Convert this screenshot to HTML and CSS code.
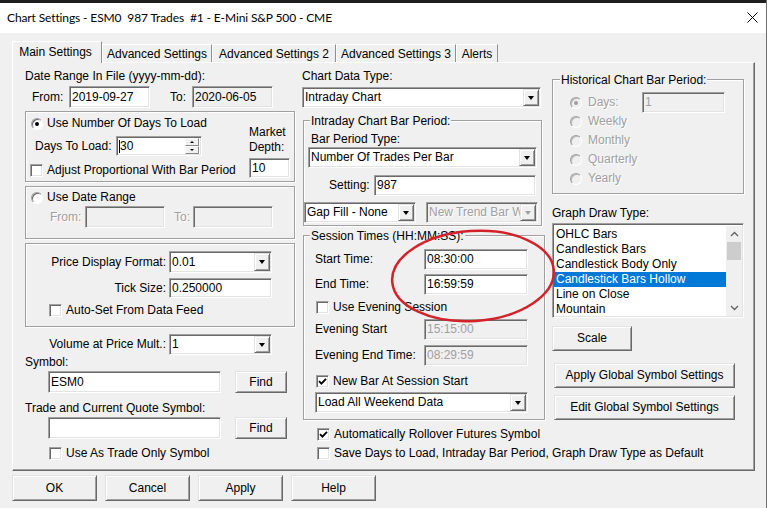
FILE: index.html
```html
<!DOCTYPE html>
<html lang="en">
<head>
<meta charset="utf-8">
<title>Chart Settings</title>
<link rel="stylesheet" href="styles.css">
</head>
<body>
<div class="window">
  <div class="topstrip"></div>
  <div class="titlebar">
    <span class="title">Chart Settings - ESM0&nbsp; 987 Trades&nbsp; #1 - E-Mini S&amp;P 500 - CME</span>
    <svg class="close" viewBox="0 0 11 11"><path d="M0.5 0.5L10.5 10.5M10.5 0.5L0.5 10.5" stroke="#000" stroke-width="1" fill="none"/></svg>
  </div>
  <div class="client">
    <div class="tabs">
      <div class="tab active t-main">Main Settings</div>
      <div class="tab t-adv">Advanced Settings</div>
      <div class="tab t-adv2">Advanced Settings 2</div>
      <div class="tab t-adv3">Advanced Settings 3</div>
      <div class="tab t-alerts">Alerts</div>
    </div>
    <div class="panel">
      <!-- LEFT COLUMN -->
      <div class="col">
        <div class="line">Date Range In File (yyyy-mm-dd):</div>
        <div class="row daterange">
          <span class="from-lbl">From:</span>
          <span class="field h22 w-date">2019-09-27</span>
          <span class="to-lbl">To:</span>
          <span class="field ro h22 w-date">2020-06-05</span>
        </div>
        <div class="group g-days">
          <div class="g-days-main">
            <div class="row opt"><span class="rb on"></span><span class="txt">Use Number Of Days To Load</span></div>
            <div class="row days-row">
              <span class="days-lbl">Days To Load:</span>
              <span class="field spin h20 w-days"><span class="val"><i class="caret"></i>30</span><span class="spinbtns"><span class="sbtn up"></span><span class="sbtn down"></span></span></span>
            </div>
            <div class="row cbrow days-cb"><span class="cb"></span><span class="txt">Adjust Proportional With Bar Period</span></div>
          </div>
          <div class="g-days-depth">
            <div class="line">Market</div>
            <div class="line">Depth:</div>
            <span class="field h20 w-depth">10</span>
          </div>
        </div>
        <div class="group g-range">
          <div class="row opt"><span class="rb"></span><span class="txt">Use Date Range</span></div>
          <div class="row range2">
            <span class="dis r-from">From:</span>
            <span class="field ro h22 w-rdate"></span>
            <span class="dis r-to">To:</span>
            <span class="field ro h22 w-rdate"></span>
          </div>
        </div>
        <div class="group g-price">
          <div class="row lblrow"><span class="rlbl">Price Display Format:</span><span class="select h22 w-fmt"><span class="val">0.01</span><span class="arrow"></span></span></div>
          <div class="row lblrow tick-row"><span class="rlbl">Tick Size:</span><span class="field h20 w-fmt">0.250000</span></div>
          <div class="row cbrow price-cb"><span class="cb"></span><span class="txt">Auto-Set From Data Feed</span></div>
        </div>
        <div class="row lblrow vol-row"><span class="rlbl vlbl">Volume at Price Mult.:</span><span class="select h21 w-fmt"><span class="val">1</span><span class="arrow"></span></span></div>
        <div class="line sym-lbl">Symbol:</div>
        <div class="row sym-row"><span class="field h22 w-sym">ESM0</span><span class="btn find">Find</span></div>
        <div class="line trade-lbl">Trade and Current Quote Symbol:</div>
        <div class="row sym-row"><span class="field h22 w-sym"></span><span class="btn find">Find</span></div>
        <div class="row cbrow trade-cb"><span class="cb"></span><span class="txt">Use As Trade Only Symbol</span></div>
      </div>

      <!-- MIDDLE COLUMN -->
      <div class="col">
        <div class="line">Chart Data Type:</div>
        <div class="select h21 w-cdt"><span class="val">Intraday Chart</span><span class="arrow"></span></div>
        <div class="group g-intraday">
          <div class="glegend">Intraday Chart Bar Period:</div>
          <div class="line bpt-lbl">Bar Period Type:</div>
          <div class="select h21 w-bpt"><span class="val">Number Of Trades Per Bar</span><span class="arrow"></span></div>
          <div class="row setting-row"><span class="setting-lbl">Setting:</span><span class="field h21 w-setting">987</span></div>
          <div class="row gap-row">
            <span class="select h21 w-gap"><span class="val">Gap Fill - None</span><span class="arrow"></span></span>
            <span class="select dis h21 w-gap trend"><span class="val">New Trend Bar W</span><span class="arrow"></span></span>
          </div>
        </div>
        <div class="group g-session">
          <div class="glegend">Session Times (HH:MM:SS):</div>
          <div class="row time-row first"><span class="time-lbl">Start Time:</span><span class="field h21 w-time">08:30:00</span></div>
          <div class="row time-row"><span class="time-lbl">End Time:</span><span class="field h21 w-time">16:59:59</span></div>
          <div class="row cbrow sess-cb"><span class="cb"></span><span class="txt">Use Evening Session</span></div>
          <div class="row time-row eve1"><span class="time-lbl">Evening Start</span><span class="field ro dtext h21 w-time">15:15:00</span></div>
          <div class="row time-row eve2"><span class="time-lbl">Evening End Time:</span><span class="field ro dtext h21 w-time">08:29:59</span></div>
          <div class="row cbrow sess-cb2"><span class="cb"><svg viewBox="0 0 9 9" width="9" height="9"><path d="M1 4.2L3.4 6.6L8 1.8" fill="none" stroke="#000" stroke-width="1.8"/></svg></span><span class="txt">New Bar At Session Start</span></div>
          <div class="select h21 w-weekend"><span class="val">Load All Weekend Data</span><span class="arrow"></span></div>
        </div>
        <div class="row cbrow roll-cb"><span class="cb"><svg viewBox="0 0 9 9" width="9" height="9"><path d="M1 4.2L3.4 6.6L8 1.8" fill="none" stroke="#000" stroke-width="1.8"/></svg></span><span class="txt">Automatically Rollover Futures Symbol</span></div>
        <div class="row cbrow save-cb"><span class="cb"></span><span class="txt">Save Days to Load, Intraday Bar Period, Graph Draw Type as Default</span></div>
      </div>

      <!-- RIGHT COLUMN -->
      <div class="col">
        <div class="group g-hist">
          <div class="glegend">Historical Chart Bar Period:</div>
          <div class="row hist-days"><span class="rb dis-rb on"></span><span class="dis hist-lbl">Days:</span><span class="field ro dtext h21 w-hdays">1</span></div>
          <div class="row hist-opt first"><span class="rb dis-rb"></span><span class="dis">Weekly</span></div>
          <div class="row hist-opt"><span class="rb dis-rb"></span><span class="dis">Monthly</span></div>
          <div class="row hist-opt"><span class="rb dis-rb"></span><span class="dis">Quarterly</span></div>
          <div class="row hist-opt"><span class="rb dis-rb"></span><span class="dis">Yearly</span></div>
        </div>
        <div class="line gdt-lbl">Graph Draw Type:</div>
        <div class="listbox">
          <div class="items">
            <div class="item">OHLC Bars</div>
            <div class="item">Candlestick Bars</div>
            <div class="item">Candlestick Body Only</div>
            <div class="item sel">Candlestick Bars Hollow</div>
            <div class="item">Line on Close</div>
            <div class="item">Mountain</div>
          </div>
          <div class="vscroll">
            <span class="sarrow"><svg viewBox="0 0 9 6" width="9" height="6"><path d="M1 5L4.5 1.5L8 5" fill="none" stroke="#606060" stroke-width="1.3"/></svg></span>
            <span class="track"><span class="thumb"></span></span>
            <span class="sarrow"><svg viewBox="0 0 9 6" width="9" height="6"><path d="M1 1L4.5 4.5L8 1" fill="none" stroke="#606060" stroke-width="1.3"/></svg></span>
          </div>
        </div>
        <div class="btn scale">Scale</div>
        <div class="btn global apply-g">Apply Global Symbol Settings</div>
        <div class="btn global edit-g">Edit Global Symbol Settings</div>
      </div>

      <svg class="annot" width="741" height="407" viewBox="0 0 741 407"><ellipse cx="460" cy="213" rx="81" ry="45" transform="rotate(-4 460 213)" fill="none" stroke="#d3222a" stroke-width="2.5"/></svg>
    </div>
    <div class="buttons">
      <span class="btn dlg">OK</span>
      <span class="btn dlg">Cancel</span>
      <span class="btn dlg">Apply</span>
      <span class="btn dlg">Help</span>
    </div>
  </div>
</div>
</body>
</html>
```

FILE: styles.css
```css
* { box-sizing: border-box; }
html, body { margin: 0; padding: 0; }
body {
  width: 768px; height: 508px; overflow: hidden; background: #fff;
  font: 12px/15px "Liberation Sans", Arial, sans-serif; color: #000;
}
.window { width: 767px; height: 508px; border-right: 1px solid #707070; display: flex; flex-direction: column; }
.topstrip { height: 3px; flex: none; background: #1e1e1e; }
.titlebar {
  height: 30px; flex: none; background: #fff; display: flex; align-items: center;
  justify-content: space-between; padding: 0 8px 2px 7px;
}
.title { font-family: Lato, "Noto Sans", sans-serif; font-size: 12px; letter-spacing: -0.12px; white-space: nowrap; }
.close { width: 11px; height: 11px; }
.client { flex: 1; background: #f0f0f0; padding: 8px 0 0 12px; }

/* tabs */
.tabs { display: flex; align-items: flex-end; height: 21px; }
.tab {
  height: 18px; padding-top: 2px; line-height: 15px; text-align: center; white-space: nowrap;
  border-top: 1px solid #fff; border-left: 1px solid #fff; border-right: 1px solid #8f8f8f;
}
.tab.active { height: 22px; padding-top: 3px; margin-bottom: -1px; position: relative; z-index: 2; background: #f0f0f0; }
.t-main { width: 90px; padding-right: 3px; }
.t-adv { width: 110px; }
.t-adv2 { width: 124px; }
.t-adv3 { width: 120px; }
.t-alerts { width: 42px; }

/* panel */
.panel {
  position: relative; width: 743px; height: 409px;
  border: 1px solid; border-color: #fff #696969 #696969 #fff;
  box-shadow: inset -1px -1px #a0a0a0;
  display: grid; grid-template-columns: 270px 243px 192px; column-gap: 7px;
  padding-left: 12px; align-items: start;
}
.col { padding-top: 6px; }
.annot { position: absolute; left: 0; top: 0; pointer-events: none; }

.line { height: 15px; line-height: 15px; white-space: nowrap; }
.row { display: flex; align-items: center; white-space: nowrap; }
.cbrow, .opt { height: 15px; }
.txt { margin-left: 4px; }
.dis { color: #a0a0a0; text-shadow: 1px 1px #fff; }

/* controls */
.field {
  display: flex; align-items: center; flex: none; background: #fff;
  border: 1px solid; border-color: #a0a0a0 #fff #fff #a0a0a0;
  box-shadow: inset 1px 1px #696969, inset -1px -1px #e3e3e3;
  padding-left: 2px; white-space: nowrap; overflow: hidden;
}
.field.ro { background: #f0f0f0; }
.field.dtext { color: #a0a0a0; }
.h20 { height: 20px; }
.h21 { height: 21px; }
.h22 { height: 22px; }

.select {
  display: flex; flex: none; background: #fff;
  border: 1px solid; border-color: #a0a0a0 #fff #fff #a0a0a0;
  box-shadow: inset 1px 1px #696969, inset -1px -1px #e3e3e3;
  padding: 1px; white-space: nowrap;
}
.select .val { flex: 1; min-width: 0; overflow: hidden; display: flex; align-items: center; padding-left: 1px; }
.select .arrow {
  width: 16px; flex: none; display: flex; align-items: center; justify-content: center;
  background: #f0f0f0; border: 1px solid; border-color: #e3e3e3 #696969 #696969 #e3e3e3;
  box-shadow: inset 1px 1px #fff, inset -1px -1px #a0a0a0;
}
.select .arrow::after {
  content: ""; border-style: solid; border-width: 4px 3.5px 0 3.5px;
  border-color: #000 transparent transparent transparent;
}
.select.dis { background: #f0f0f0; }
.select.dis .val { color: #a0a0a0; text-shadow: 1px 1px #fff; }
.select.dis .arrow::after { border-top-color: #a0a0a0; }

.btn {
  display: flex; align-items: center; justify-content: center; flex: none;
  background: #f0f0f0; white-space: nowrap;
  border: 1px solid; border-color: #e3e3e3 #696969 #696969 #e3e3e3;
  box-shadow: inset 1px 1px #fff, inset -1px -1px #a0a0a0;
}

.cb {
  width: 13px; height: 13px; flex: none; background: #fff;
  border: 1px solid; border-color: #a0a0a0 #fff #fff #a0a0a0;
  box-shadow: inset 1px 1px #696969, inset -1px -1px #e3e3e3;
  display: inline-flex; align-items: center; justify-content: center;
}
.rb {
  width: 12px; height: 12px; flex: none; border-radius: 50%; background: #fff;
  border: 1px solid; border-color: #a0a0a0 #fff #fff #a0a0a0;
  box-shadow: inset 1px 1px #696969;
  display: inline-flex; align-items: center; justify-content: center;
}
.rb.on::after { content: ""; width: 4px; height: 4px; border-radius: 50%; background: #000; }
.rb.dis-rb { background: #f0f0f0; box-shadow: inset 1px 1px #b9b9b9; }
.rb.dis-rb.on::after { background: #a0a0a0; }

.group {
  border: 1px solid #a0a0a0;
  box-shadow: inset 1px 1px #fff, 1px 1px #fff;
}
.glegend {
  display: table; margin: -7px 0 0 6px; padding: 0 1px; line-height: 14px;
  background: #f0f0f0; white-space: nowrap;
}

/* left column */
.daterange { margin-top: 2px; height: 22px; padding-left: 7px; }
.from-lbl { width: 37px; }
.to-lbl { width: 22px; margin-left: 20px; }
.w-date { width: 81px; }

.g-days { margin-top: 3px; width: 270px; height: 71px; padding-top: 4px; display: grid; grid-template-columns: 223px 42px; }
.g-days .opt .rb { margin-left: 5px; }
.days-row { margin-top: 5px; height: 20px; }
.days-lbl { width: 81px; margin-left: 9px; }
.w-days { width: 86px; padding-left: 2px; padding-right: 2px; }
.spin .val { flex: 1; display: flex; align-items: center; }
.caret { display: inline-block; width: 1px; height: 13px; background: #000; }
.spinbtns { width: 14px; height: 16px; display: flex; flex-direction: column; }
.sbtn {
  flex: 1; display: flex; align-items: center; justify-content: center; background: #f0f0f0;
  border: 1px solid; border-color: #fff #8a8a8a #8a8a8a #fff;
}
.sbtn.up::after { content: ""; border-style: solid; border-width: 0 2px 2px 2px; border-color: transparent transparent #000 transparent; }
.sbtn.down::after { content: ""; border-style: solid; border-width: 2px 2px 0 2px; border-color: #000 transparent transparent transparent; }
.days-cb { margin-top: 7px; }
.days-cb .cb { margin-left: 4px; }
.g-days-depth { padding-top: 9px; }
.w-depth { width: 41px; margin-top: 3px; }

.g-range { margin-top: 4px; width: 270px; height: 53px; padding-top: 3px; }
.g-range .opt .rb { margin-left: 5px; }
.range2 { margin-top: 1px; height: 22px; }
.r-from { width: 35px; margin-left: 24px; }
.r-to { width: 19px; margin-left: 9px; }
.w-rdate { width: 80px; }

.g-price { margin-top: 4px; width: 270px; height: 84px; padding-top: 7px; }
.rlbl { width: 140px; text-align: right; margin-right: 3px; }
.w-fmt { width: 103px; }
.tick-row { margin-top: 5px; }
.price-cb { margin-top: 5px; }
.price-cb .cb { margin-left: 23px; }

.vol-row { margin-top: 7px; }
.rlbl.vlbl { width: 141px; }
.sym-lbl { margin-top: 0; }
.sym-row { margin-top: 1px; height: 22px; }
.w-sym { width: 173px; margin-left: 23px; }
.find { width: 52px; height: 22px; margin-left: 14px; }
.trade-lbl { margin-top: 8px; }
.trade-cb { margin-top: 7px; }
.trade-cb .cb { margin-left: 24px; }

/* middle column */
.w-cdt { width: 239px; margin-top: 3px; }
.g-intraday { margin: 12px 0 0 1px; width: 239px; height: 106px; }
.bpt-lbl { margin: 4px 0 0 7px; }
.w-bpt { width: 229px; margin: 0 0 0 4px; }
.setting-row { margin-top: 7px; }
.setting-lbl { width: 45px; margin-left: 25px; }
.w-setting { width: 162px; }
.gap-row { margin-top: 6px; }
.w-gap { width: 112px; }
.w-gap.trend { margin-left: 10px; }

.g-session { margin: 9px 0 0 1px; width: 242px; height: 185px; }
.time-row { height: 21px; margin-top: 4px; }
.time-row.first { margin-top: 6px; }
.time-lbl { width: 109px; margin-left: 11px; }
.w-time { width: 104px; }
.sess-cb { margin-top: 5px; }
.sess-cb .cb, .sess-cb2 .cb { margin-left: 12px; }
.eve1 { margin-top: 4px; }
.eve2 { margin-top: 5px; }
.sess-cb2 { margin-top: 8px; }
.w-weekend { width: 213px; margin: 3px 0 0 11px; }
.roll-cb { margin-top: 7px; }
.roll-cb .cb, .save-cb .cb { margin-left: 15px; }
.save-cb { margin-top: 4px; }

/* right column */
.g-hist { margin-top: 10px; width: 192px; height: 115px; }
.g-hist .glegend { margin-left: 7px; }
.hist-days { margin-top: 5px; height: 21px; }
.hist-days .rb, .hist-opt .rb { margin-left: 17px; margin-right: 6px; }
.hist-lbl { width: 54px; }
.w-hdays { width: 83px; }
.hist-opt { height: 15px; margin-top: 4px; }
.hist-opt.first { margin-top: 1px; }
.gdt-lbl { margin-top: 12px; }

.listbox {
  margin-top: 2px; width: 192px; height: 95px; display: flex; background: #fff;
  border: 1px solid; border-color: #a0a0a0 #fff #fff #a0a0a0;
  box-shadow: inset 1px 1px #696969, inset -1px -1px #e3e3e3;
  padding: 2px 1px 1px 1px;
}
.items { flex: 1; min-width: 0; padding-top: 1px; }
.item { height: 15px; line-height: 15px; padding-left: 2px; white-space: nowrap; }
.item.sel { background: #0078d7; color: #fff; }
.vscroll { width: 16px; flex: none; display: flex; flex-direction: column; background: #f0f0f0; }
.sarrow { height: 16px; flex: none; display: flex; align-items: center; justify-content: center; }
.track { flex: 1; display: block; }
.thumb { display: block; height: 18px; margin: 0 1px; background: #cdcdcd; }

.scale { margin-top: 8px; width: 80px; height: 25px; }
.global { width: 181px; height: 25px; margin-left: 2px; }
.apply-g { margin-top: 12px; }
.edit-g { margin-top: 7px; }

/* bottom buttons */
.buttons { display: flex; gap: 8px; margin-top: 4px; }
.dlg { width: 85px; height: 26px; }
```
